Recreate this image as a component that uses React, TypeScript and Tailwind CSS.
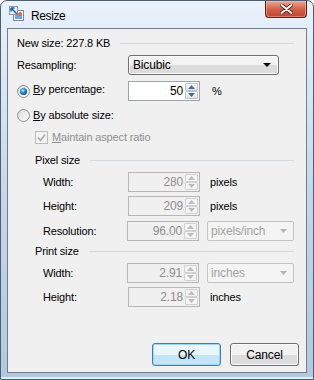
import React from "react";

interface SpinnerProps {
  value: string;
  disabled?: boolean;
}

function SpinArrow({ up, disabled }: { up?: boolean; disabled?: boolean }) {
  return (
    <div
      className={`flex flex-1 items-center justify-center rounded-[1px] border ${
        disabled
          ? "border-[#d2d2d2] bg-[#f4f4f4]"
          : "border-[#b9c2cc] bg-gradient-to-b from-[#fafbfc] to-[#dfe5ec]"
      }`}
    >
      <svg width="7" height="4" viewBox="0 0 7 4">
        <path
          d={up ? "M0 4 L3.5 0 L7 4Z" : "M0 0 L3.5 4 L7 0Z"}
          fill={disabled ? "#bdbdbd" : "#4b6a93"}
        />
      </svg>
    </div>
  );
}

function Spinner({ value, disabled }: SpinnerProps) {
  return (
    <div
      className={`flex h-[20px] w-[72px] shrink-0 border ${
        disabled
          ? "border-[#b7b7b7] bg-[#f0f0f0] text-[#8e8e8e]"
          : "border-[#a0a3a8] bg-white text-black"
      }`}
    >
      <div className="flex-1 pr-[2px] text-right text-[12px] leading-[18px]">
        {value}
      </div>
      <div className="mr-px flex w-[13px] flex-col py-px">
        <SpinArrow up disabled={disabled} />
        <SpinArrow disabled={disabled} />
      </div>
    </div>
  );
}

function UnitSelect({ value }: { value: string }) {
  return (
    <div className="ml-[8px] flex h-[20px] w-[87px] shrink-0 items-center rounded-[2px] border border-[#c3c3c3] bg-[#f4f4f4] pl-[3px] pr-[6px] text-[12px] text-[#a4a4a4]">
      <span className="flex-1">{value}</span>
      <svg width="7" height="4" viewBox="0 0 7 4">
        <path d="M0 0 L3.5 4 L7 0Z" fill="#b4b4b4" />
      </svg>
    </div>
  );
}

function Radio({ checked }: { checked?: boolean }) {
  return (
    <svg width="13" height="13" viewBox="0 0 13 13" className="shrink-0">
      <defs>
        <linearGradient id="rbg" x1="0" y1="0" x2="1" y2="1">
          <stop offset="0" stopColor="#d9d9d9" />
          <stop offset="1" stopColor="#ffffff" />
        </linearGradient>
        <radialGradient id="rdot" cx="0.4" cy="0.35" r="0.7">
          <stop offset="0" stopColor="#b9ecff" />
          <stop offset="0.45" stopColor="#2a97d8" />
          <stop offset="1" stopColor="#0b3d6a" />
        </radialGradient>
      </defs>
      <circle cx="6.5" cy="6.5" r="6" fill="url(#rbg)" stroke="#8f8f8f" />
      {checked && <circle cx="6.5" cy="6.5" r="3.6" fill="url(#rdot)" />}
    </svg>
  );
}

function Separator() {
  return <div className="h-px flex-1 bg-[#d3d9e0]" />;
}

function App() {
  return (
    <div className="h-[380px] w-[314px] bg-white">
      <div className="relative flex h-[380px] w-[314px] flex-col overflow-hidden rounded-t-[7px] border border-[#4f5e70] bg-gradient-to-b from-[#eaf2fb] via-[#c6d8ea] to-[#b3c8de] font-['Liberation_Sans',Arial,sans-serif] text-[11px] tracking-[-0.15px] text-black">
        {/* title bar */}
        <div className="flex h-[27px] shrink-0 items-start">
          <svg width="17" height="17" viewBox="0 0 17 17" className="ml-[7px] mt-[4px]">
            <rect x="5.5" y="5.5" width="10" height="10" fill="#ffffff" stroke="#7a8aa0" />
            <rect x="7" y="10" width="7" height="4" fill="#6fa5d8" />
            <circle cx="12" cy="9" r="2" fill="#e5672e" />
            <rect x="1.5" y="1.5" width="8" height="8" fill="#eef3fa" stroke="#8b9ab0" />
            <path d="M3 3 L9 9 M3 3 L3 6.5 M3 3 L6.5 3" stroke="#1f5fb8" strokeWidth="1.5" fill="none" />
          </svg>
          <span className="ml-[6px] mt-[6px] text-[12px] tracking-[-0.4px] text-black">
            Resize
          </span>
          <div className="ml-auto mr-[6px] flex h-[17px] w-[42px] items-center justify-center rounded-b-[4px] border border-t-0 border-[#5b2417] bg-gradient-to-b from-[#e8a898] via-[#d2624a] to-[#c0442a] shadow-[inset_0_0_0_1px_rgba(255,200,180,0.45)]">
            <svg width="13" height="10" viewBox="0 0 13 10">
              <path
                d="M1.5 1 L11.5 9 M11.5 1 L1.5 9"
                stroke="#4a1a10"
                strokeWidth="3.6"
                strokeLinecap="round"
              />
              <path
                d="M1.5 1 L11.5 9 M11.5 1 L1.5 9"
                stroke="#ffffff"
                strokeWidth="2"
                strokeLinecap="round"
              />
            </svg>
          </div>
        </div>

        {/* client area */}
        <div className="mx-[6px] flex h-[345px] shrink-0 flex-col border border-[#6f7d8d] bg-[#f0f0f0] pl-[9px] pr-[12px] pt-[4px]">
          <div className="flex h-[20px] items-center gap-[10px]">
            <span>New size: 227.8 KB</span>
            <Separator />
          </div>

          <div className="mt-[2px] flex h-[20px] items-center">
            <span className="w-[111px]">Resampling:</span>
            <div className="flex h-[20px] w-[151px] items-center rounded-[3px] border border-[#707070] bg-gradient-to-b from-[#f3f3f3] from-50% to-[#dcdcdc] to-50% pl-[4px] pr-[7px] text-[12px] shadow-[inset_0_0_0_1px_#fcfcfc]">
              <span className="flex-1">Bicubic</span>
              <svg width="8" height="4" viewBox="0 0 8 4">
                <path d="M0 0 L4 4 L8 0Z" fill="#000" />
              </svg>
            </div>
          </div>

          <div className="mt-[6px] flex h-[20px] items-center">
            <div className="flex w-[111px] items-center">
              <Radio checked />
              <span className="-mt-[4px] ml-[3px]">
                <span className="underline">B</span>y percentage:
              </span>
            </div>
            <Spinner value="50" />
            <span className="ml-[12px]">%</span>
          </div>

          <div className="mt-[4px] flex h-[20px] items-center">
            <Radio />
            <span className="ml-[3px]">
              <span className="underline">B</span>y absolute size:
            </span>
          </div>

          <div className="mt-[2px] flex h-[20px] items-center pl-[18px] text-[#8f8f8f]">
            <svg width="13" height="13" viewBox="0 0 13 13" className="shrink-0">
              <rect x="0.5" y="0.5" width="12" height="12" fill="#f4f4f4" stroke="#bcbcbc" />
              <path d="M3 6.5 L5.5 9.5 L10 3.5" stroke="#a9a9a9" strokeWidth="1.6" fill="none" />
            </svg>
            <span className="ml-[4px]">
              <span className="underline">M</span>aintain aspect ratio
            </span>
          </div>

          <div className="mt-[3px] flex h-[20px] items-center gap-[10px] pl-[18px]">
            <span>Pixel size</span>
            <Separator />
          </div>

          <div className="mt-[2px] flex h-[20px] items-center pl-[26px]">
            <span className="w-[85px]">Width:</span>
            <Spinner value="280" disabled />
            <span className="ml-[10px]">pixels</span>
          </div>

          <div className="mt-[4px] flex h-[20px] items-center pl-[26px]">
            <span className="w-[85px]">Height:</span>
            <Spinner value="209" disabled />
            <span className="ml-[10px]">pixels</span>
          </div>

          <div className="mt-[5px] flex h-[20px] items-center pl-[26px]">
            <span className="w-[85px]">Resolution:</span>
            <Spinner value="96.00" disabled />
            <UnitSelect value="pixels/inch" />
          </div>

          <div className="flex h-[20px] items-center gap-[10px] pl-[18px]">
            <span>Print size</span>
            <Separator />
          </div>

          <div className="mt-[2px] flex h-[20px] items-center pl-[26px]">
            <span className="w-[85px]">Width:</span>
            <Spinner value="2.91" disabled />
            <UnitSelect value="inches" />
          </div>

          <div className="mt-[4px] flex h-[20px] items-center pl-[26px]">
            <span className="w-[85px]">Height:</span>
            <Spinner value="2.18" disabled />
            <span className="ml-[10px]">inches</span>
          </div>

          <div className="mt-[36px] flex justify-end gap-[9px] text-[12px]">
            <button className="flex h-[23px] w-[69px] items-center justify-center rounded-[3px] border border-[#3c7fb1] bg-gradient-to-b from-[#eaf6fd] from-50% to-[#c4e5f6] to-50% shadow-[inset_0_0_0_1px_#9fd6f3]">
              OK
            </button>
            <button className="-mr-[5px] flex h-[23px] w-[69px] items-center justify-center rounded-[3px] border border-[#707070] bg-gradient-to-b from-[#f2f2f2] from-50% to-[#dcdcdc] to-50% shadow-[inset_0_0_0_1px_#fbfbfb]">
              Cancel
            </button>
          </div>
        </div>

        <div className="flex-1 border-b-2 border-[#d8f2ff]" />
      </div>
    </div>
  );
}

export default App;
